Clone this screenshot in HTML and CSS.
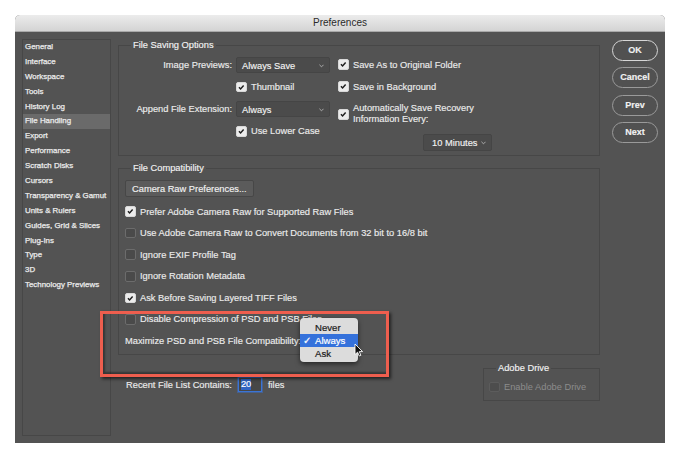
FILE: index.html
```html
<!DOCTYPE html>
<html lang="en">
<head>
    <meta charset="UTF-8">
    <meta name="viewport" content="width=device-width, initial-scale=1.0">
    <title>Preferences</title>
    <link rel="stylesheet" href="styles.css">
</head>
<body>
    <div class="window">
        <div class="titlebar">Preferences</div>
        <div class="content">
            <ul class="sidebar">
                <li>General</li>
                <li>Interface</li>
                <li>Workspace</li>
                <li>Tools</li>
                <li>History Log</li>
                <li class="active">File Handling</li>
                <li>Export</li>
                <li>Performance</li>
                <li>Scratch Disks</li>
                <li>Cursors</li>
                <li>Transparency &amp; Gamut</li>
                <li>Units &amp; Rulers</li>
                <li>Guides, Grid &amp; Slices</li>
                <li>Plug-Ins</li>
                <li>Type</li>
                <li>3D</li>
                <li>Technology Previews</li>
            </ul>

            <div class="main">
                <fieldset class="group saving">
                    <legend>File Saving Options</legend>
                    <div class="saving-body">
                        <div class="saving-left">
                            <span class="field-label">Image Previews:</span>
                            <div class="select">Always Save<svg class="chev" viewBox="0 0 6 4"><path d="M0.5 0.5 L3 3 L5.5 0.5"/></svg></div>
                            <span></span>
                            <div class="check"><span class="box on"><svg viewBox="0 0 10 10"><path d="M2.3 5.1 L4.2 7.1 L7.8 2.9"/></svg></span>Thumbnail</div>
                            <span class="field-label">Append File Extension:</span>
                            <div class="select">Always<svg class="chev" viewBox="0 0 6 4"><path d="M0.5 0.5 L3 3 L5.5 0.5"/></svg></div>
                            <span></span>
                            <div class="check"><span class="box on"><svg viewBox="0 0 10 10"><path d="M2.3 5.1 L4.2 7.1 L7.8 2.9"/></svg></span>Use Lower Case</div>
                        </div>
                        <div class="saving-right">
                            <div class="check"><span class="box on"><svg viewBox="0 0 10 10"><path d="M2.3 5.1 L4.2 7.1 L7.8 2.9"/></svg></span>Save As to Original Folder</div>
                            <div class="check gap-bg"><span class="box on"><svg viewBox="0 0 10 10"><path d="M2.3 5.1 L4.2 7.1 L7.8 2.9"/></svg></span>Save in Background</div>
                            <div class="check two-line"><span class="box on"><svg viewBox="0 0 10 10"><path d="M2.3 5.1 L4.2 7.1 L7.8 2.9"/></svg></span>Automatically Save Recovery<br>Information Every:</div>
                            <div class="select minutes">10 Minutes<svg class="chev" viewBox="0 0 6 4"><path d="M0.5 0.5 L3 3 L5.5 0.5"/></svg></div>
                        </div>
                    </div>
                </fieldset>

                <fieldset class="group compat">
                    <legend>File Compatibility</legend>
                    <div class="compat-body">
                        <div class="push-button">Camera Raw Preferences...</div>
                        <div class="check-list">
                            <div class="check"><span class="box on"><svg viewBox="0 0 10 10"><path d="M2.3 5.1 L4.2 7.1 L7.8 2.9"/></svg></span>Prefer Adobe Camera Raw for Supported Raw Files</div>
                            <div class="check"><span class="box"></span>Use Adobe Camera Raw to Convert Documents from 32 bit to 16/8 bit</div>
                            <div class="check"><span class="box"></span>Ignore EXIF Profile Tag</div>
                            <div class="check"><span class="box"></span>Ignore Rotation Metadata</div>
                            <div class="check"><span class="box on"><svg viewBox="0 0 10 10"><path d="M2.3 5.1 L4.2 7.1 L7.8 2.9"/></svg></span>Ask Before Saving Layered TIFF Files</div>
                            <div class="check"><span class="box"></span>Disable Compression of PSD and PSB Files</div>
                            <div class="plain-row">Maximize PSD and PSB File Compatibility:</div>
                        </div>
                    </div>
                </fieldset>

                <div class="bottom-row">
                    <div class="recent">
                        <span>Recent File List Contains:</span>
                        <span class="num-input"><span class="sel">20</span></span>
                        <span>files</span>
                    </div>
                    <fieldset class="group drive">
                        <legend>Adobe Drive</legend>
                        <div class="check disabled"><span class="box"></span>Enable Adobe Drive</div>
                    </fieldset>
                </div>
            </div>

            <div class="buttons">
                <div class="btn default">OK</div>
                <div class="btn">Cancel</div>
                <div class="btn">Prev</div>
                <div class="btn">Next</div>
            </div>
        </div>

        <!-- callout and the open popup sit over the dialog -->
        <div class="callout"></div>
        <div class="popup">
            <div class="item">Never</div>
            <div class="item picked"><span class="tick">✓</span>Always</div>
            <div class="item">Ask</div>
        </div>
        <svg class="cursor" viewBox="0 0 9 14"><path d="M1 1 L1 11.5 L3.6 9.2 L5.3 13 L6.9 12.3 L5.3 8.6 L8.6 8.6 Z"/></svg>
    </div>
</body>
</html>
```

FILE: styles.css
```css
body {
    margin: 0;
    background: #ffffff;
    font-family: 'Liberation Sans', Arial, sans-serif;
    font-size: 9.3px;
    color: #ececec;
    -webkit-text-stroke: 0.15px;
}
.window {
    position: relative;
    margin: 15px 0 0 15px;
    width: 650px;
    height: 428px;
    background: #535353;
    border-radius: 5px 5px 0 0;
}
.titlebar {
    height: 16px;
    line-height: 16px;
    text-align: center;
    font-size: 10px;
    color: #2a2a2a;
    -webkit-text-stroke: 0;
    background: linear-gradient(#ececec, #d4d4d4);
    border-bottom: 1px solid #a9a9a9;
    border-radius: 5px 5px 0 0;
}
.content {
    display: flex;
    padding: 7px 0 0 7px;
}

/* left list */
.sidebar {
    list-style: none;
    margin: 0;
    padding: 0;
    width: 87px;
    height: 395px;
    border: 1px solid #474747;
    font-size: 7.9px;
    color: #ececec;
    -webkit-text-stroke: 0.25px;
}
.sidebar li {
    height: 14.9px;
    line-height: 14.9px;
    padding-left: 2px;
    white-space: nowrap;
}
.sidebar li.active {
    background: #6a6a6a;
}

/* middle column */
.main {
    width: 482px;
    margin-left: 7px;
    padding-top: 0.5px;
}
.group {
    margin: 0;
    padding: 0;
    border: 1px solid #474747;
    min-width: 0;
}
.group legend {
    margin-left: 12px;
    padding: 0 2px;
    line-height: 11px;
    color: #f2f2f2;
}
.saving-body {
    display: flex;
    padding: 6px 0 4px 0;
}
.saving-left {
    display: grid;
    grid-template-columns: 113px 94px;
    grid-template-rows: 16px 14px 16px 14px;
    column-gap: 4px;
    row-gap: 7.3px;
    align-items: center;
}
.field-label {
    text-align: right;
    white-space: nowrap;
}
.select {
    position: relative;
    height: 16px;
    line-height: 16px;
    box-sizing: border-box;
    padding-left: 5px;
    background: #4b4b4b;
    border: 1px solid #454545;
    border-radius: 2px;
    color: #f2f2f2;
}
.select .chev {
    position: absolute;
    right: 5px;
    top: 6px;
    width: 5px;
    height: 4px;
    fill: none;
    stroke: #bdbdbd;
    stroke-width: 1;
}
.saving-right {
    display: flex;
    flex-direction: column;
    margin-left: 8px;
    padding-top: 1px;
}
.check {
    display: flex;
    align-items: center;
    height: 14px;
    white-space: nowrap;
}
.check .box {
    flex: none;
    width: 10.5px;
    height: 10.5px;
    box-sizing: border-box;
    margin-right: 4.5px;
    border: 1px solid #6c6c6c;
    border-radius: 2px;
    background: #4a4a4a;
}
.check .box.on {
    background: #ececec;
    border-color: #d8d8d8;
}
.check .box svg {
    display: block;
    width: 8.5px;
    height: 8.5px;
    fill: none;
    stroke: #1e1e1e;
    stroke-width: 1.7;
    -webkit-text-stroke: 0;
}
.saving-right .gap-bg {
    margin-top: 8px;
}
.saving-right .two-line {
    height: 22px;
    line-height: 11px;
    margin-top: 9.5px;
}
.saving-right .two-line .box {
    margin-top: 1px;
}
.select.minutes {
    width: 69px;
    height: 17px;
    line-height: 17px;
    margin: 8.5px 0 0 85px;
    padding-left: 8px;
}

.compat {
    margin-top: 7.5px;
}
.compat-body {
    padding: 5.5px 6px 6px 6px;
}
.push-button {
    width: 129px;
    height: 17px;
    line-height: 17px;
    box-sizing: border-box;
    padding-left: 6px;
    background: #5b5b5b;
    border: 1px solid #474747;
    border-radius: 2px;
    color: #f2f2f2;
}
.check-list {
    display: flex;
    flex-direction: column;
    gap: 7.6px;
    margin-top: 8px;
}
.plain-row {
    height: 14px;
    line-height: 14px;
    white-space: nowrap;
}

.bottom-row {
    display: flex;
    justify-content: space-between;
    align-items: flex-start;
    margin-top: 8px;
}
.recent {
    display: flex;
    align-items: center;
    margin: 14px 0 0 8px;
}
.num-input {
    width: 24px;
    height: 15px;
    box-sizing: border-box;
    margin: 0 6px 0 6px;
    padding: 1px 2px;
    background: #474747;
    border: 1px solid #3a74d6;
    box-shadow: 0 0 0 1px rgba(58, 116, 214, 0.45);
}
.num-input .sel {
    display: inline-block;
    height: 11px;
    line-height: 11px;
    background: #3264c2;
    color: #ffffff;
}
.drive {
    width: 117px;
    height: 38px;
    box-sizing: border-box;
}
.drive .check {
    margin: 6px 0 0 5px;
    color: #8c8c8c;
    -webkit-text-stroke: 0;
}
.check.disabled .box {
    background: #4d4d4d;
    border-color: #5c5c5c;
}

/* right buttons */
.buttons {
    display: flex;
    flex-direction: column;
    gap: 6.3px;
    margin: 1px 0 0 12px;
}
.btn {
    width: 46px;
    height: 21px;
    line-height: 19px;
    box-sizing: border-box;
    text-align: center;
    font-size: 9px;
    font-weight: bold;
    color: #f2f2f2;
    background: #515151;
    border: 1px solid #9a9a9a;
    border-radius: 11px;
}
.btn.default {
    border: 1.5px solid #d6d6d6;
    line-height: 18px;
}

/* overlays */
.callout {
    position: absolute;
    left: 85px;
    top: 296px;
    width: 289px;
    height: 66px;
    box-sizing: border-box;
    border: 3px solid #ee5e4e;
    box-shadow: 2px 2px 3px rgba(0, 0, 0, 0.6), inset 2px -2px 2px rgba(0, 0, 0, 0.35);
}
.popup {
    position: absolute;
    left: 285px;
    top: 303px;
    width: 58px;
    padding: 3px 0 2px 0;
    background: #dcdcdc;
    border-radius: 4px;
    box-shadow: 0 2px 5px rgba(0, 0, 0, 0.55);
    color: #1a1a1a;
    font-size: 9.6px;
    -webkit-text-stroke: 0.2px;
}
.popup .item {
    position: relative;
    height: 13px;
    line-height: 13px;
    padding-left: 15px;
}
.popup .item.picked {
    background: #3471db;
    color: #ffffff;
}
.popup .tick {
    position: absolute;
    left: 3px;
}
.cursor {
    position: absolute;
    left: 339px;
    top: 328px;
    width: 9px;
    height: 14px;
    fill: #111111;
    stroke: #ffffff;
    stroke-width: 0.9;
}
```
